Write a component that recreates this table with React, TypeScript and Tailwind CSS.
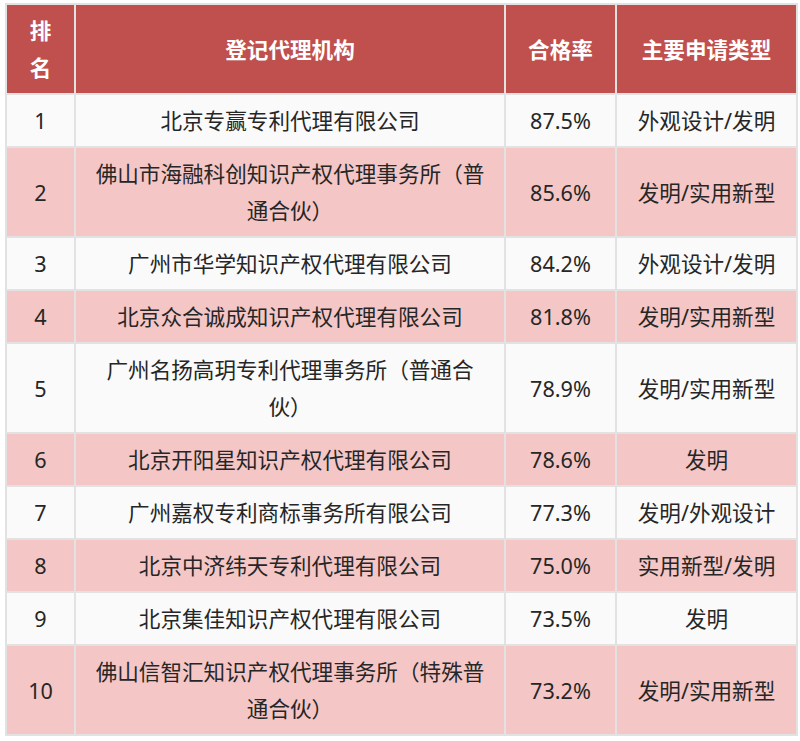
const rows = [
  { rank: '1', name: '北京专赢专利代理有限公司', rate: '87.5%', type: '外观设计/发明' },
  { rank: '2', name: '佛山市海融科创知识产权代理事务所（普通合伙）', rate: '85.6%', type: '发明/实用新型' },
  { rank: '3', name: '广州市华学知识产权代理有限公司', rate: '84.2%', type: '外观设计/发明' },
  { rank: '4', name: '北京众合诚成知识产权代理有限公司', rate: '81.8%', type: '发明/实用新型' },
  { rank: '5', name: '广州名扬高玥专利代理事务所（普通合伙）', rate: '78.9%', type: '发明/实用新型' },
  { rank: '6', name: '北京开阳星知识产权代理有限公司', rate: '78.6%', type: '发明' },
  { rank: '7', name: '广州嘉权专利商标事务所有限公司', rate: '77.3%', type: '发明/外观设计' },
  { rank: '8', name: '北京中济纬天专利代理有限公司', rate: '75.0%', type: '实用新型/发明' },
  { rank: '9', name: '北京集佳知识产权代理有限公司', rate: '73.5%', type: '发明' },
  { rank: '10', name: '佛山信智汇知识产权代理事务所（特殊普通合伙）', rate: '73.2%', type: '发明/实用新型' },
];

const cell = 'border-2 border-[#e2e2e2] px-[16px] py-[7px] text-center align-middle';

export default function App() {
  return (
    <div className="min-h-screen bg-white pl-[5px] pt-[3px]">
      <table
        className="w-[791px] table-fixed border-collapse text-[21.6px] leading-[37px] text-[#262626] [text-spacing-trim:space-all]"
        style={{ fontFamily: "'Noto Sans', 'Noto Sans CJK SC', sans-serif" }}
      >
        <colgroup>
          <col className="w-[69px]" />
          <col className="w-[430px]" />
          <col className="w-[111px]" />
          <col className="w-[181px]" />
        </colgroup>
        <thead>
          <tr className="bg-[#c0504d] font-bold text-white">
            <th className={cell}>排名</th>
            <th className={cell}>登记代理机构</th>
            <th className={cell}>合格率</th>
            <th className={cell}>主要申请类型</th>
          </tr>
        </thead>
        <tbody>
          {rows.map((r, i) => (
            <tr key={r.rank} className={i % 2 === 0 ? 'bg-[#fafafa]' : 'bg-[#f4c6c6]'}>
              <td className={cell}>{r.rank}</td>
              <td className={cell}>{r.name}</td>
              <td className={cell}>{r.rate}</td>
              <td className={cell}>{r.type}</td>
            </tr>
          ))}
        </tbody>
      </table>
    </div>
  );
}
